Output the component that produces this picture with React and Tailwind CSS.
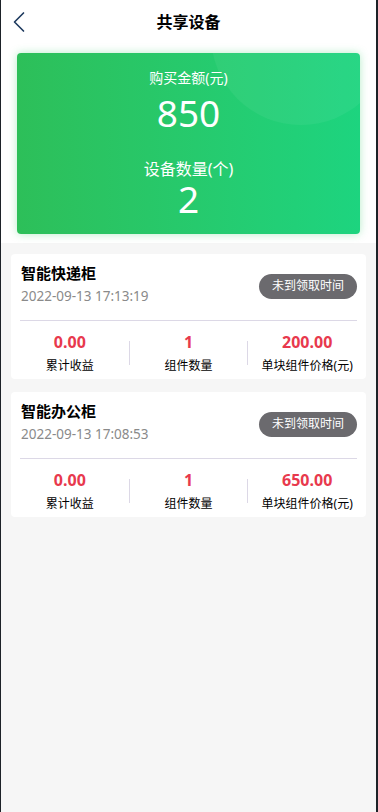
import { ChevronLeft } from 'lucide-react'

const devices = [
  { name: '智能快递柜', time: '2022-09-13 17:13:19', income: '0.00', count: '1', price: '200.00' },
  { name: '智能办公柜', time: '2022-09-13 17:08:53', income: '0.00', count: '1', price: '650.00' },
]

function Stat({ value, label }) {
  return (
    <div className="flex-1 flex flex-col items-center">
      <p className="text-[16px] font-bold text-[#e8394d] leading-[22px]">{value}</p>
      <p className="text-[12px] text-black leading-[18px] mt-[4px]">{label}</p>
    </div>
  )
}

export default function App() {
  return (
    <div
      className="w-[378px] h-[812px] bg-[#1d2228] flex pl-px pr-[2px]"
      style={{ fontFamily: '"Noto Sans", "Noto Sans CJK SC", sans-serif' }}
    >
      <div className="flex-1 bg-[#f6f6f6] flex flex-col">
        <div className="bg-white">
          <div className="h-[44px] flex items-center relative">
            <ChevronLeft size={36} strokeWidth={1.1} className="text-[#1e3a5f] absolute left-0" />
            <p className="flex-1 text-center text-[16px] font-bold text-black">共享设备</p>
          </div>
          <div className="px-[16px] pt-[9px] pb-[9px]">
            <div className="relative overflow-hidden rounded-[4px] h-[181px] bg-gradient-to-r from-[#2dbf59] to-[#1dd47f] shadow-[0_0_8px_rgba(45,200,100,0.35)] flex flex-col items-center text-white">
              <div className="absolute w-[180px] h-[180px] rounded-full bg-white/[0.05] left-[194px] top-[-108px]" />
              <p className="mt-[15px] text-[14px] leading-[20px]">购买金额(元)</p>
              <p className="mt-[4px] text-[37px] leading-[42px]">850</p>
              <p className="mt-[24px] text-[16px] leading-[22px]">设备数量(个)</p>
              <p className="text-[37px] leading-[38px]">2</p>
            </div>
          </div>
        </div>
        <div className="px-[10px] pt-[11px] flex flex-col gap-[13px]">
          {devices.map((d) => (
            <div key={d.name} className="bg-white rounded-[4px] pt-[8px] pb-[4px]">
              <div className="flex items-center justify-between pl-[10px] pr-[9px]">
                <div>
                  <p className="text-[15px] font-bold text-black leading-[22px]">{d.name}</p>
                  <p className="text-[13.5px] text-[#8a8a8a] leading-[20px] mt-[2px]">{d.time}</p>
                </div>
                <span className="bg-[#6b6a6e] text-white text-[12px] rounded-full px-[13px] h-[25px] flex items-center mt-[4px]">未到领取时间</span>
              </div>
              <div className="h-px bg-[#dcd8e6] mt-[14px] mx-[9px]" />
              <div className="flex mt-[10px]">
                <Stat value={d.income} label="累计收益" />
                <div className="w-px h-[24px] self-center bg-[#dcd8e6]" />
                <Stat value={d.count} label="组件数量" />
                <div className="w-px h-[24px] self-center bg-[#dcd8e6]" />
                <Stat value={d.price} label="单块组件价格(元)" />
              </div>
            </div>
          ))}
        </div>
      </div>
    </div>
  )
}
